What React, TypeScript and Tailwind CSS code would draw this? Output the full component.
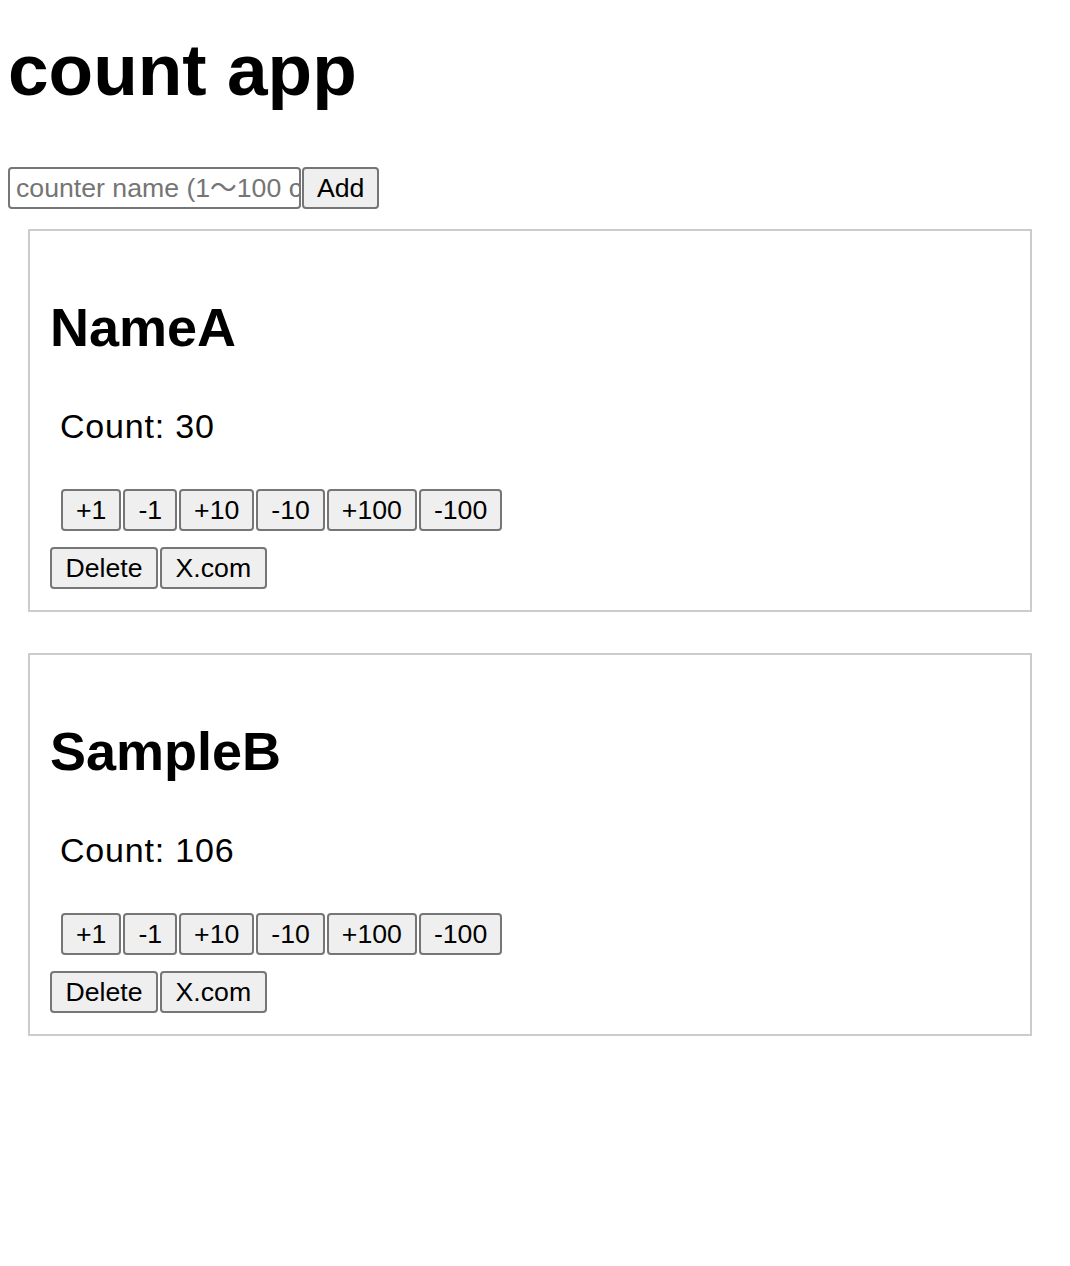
const font = { fontFamily: '"Liberation Sans", "Noto Sans CJK JP", Arial, sans-serif' }

interface Counter {
  name: string
  count: number
}

const counters: Counter[] = [
  { name: 'NameA', count: 30 },
  { name: 'SampleB', count: 106 },
]

const steps = ['+1', '-1', '+10', '-10', '+100', '-100']

function Btn({ label, wide }: { label: string; wide?: boolean }) {
  return (
    <button
      className={
        wide
          ? 'h-[42px] px-[13.5px] flex items-center justify-center bg-[#efefef] border-2 border-[#767676] rounded-[4px] text-[26.67px] leading-none text-black'
          : 'h-[42px] px-[13px] flex items-center justify-center bg-[#efefef] border-2 border-[#767676] rounded-[4px] text-[26.67px] leading-none text-black'
      }
    >
      {label}
    </button>
  )
}

function CounterCard({ counter }: { counter: Counter }) {
  return (
    <div className="border-2 border-[#cccccc] px-[20px] pt-[20px] pb-[21px]">
      <h2 className="mt-[49px] text-[54px] leading-none font-bold text-black">{counter.name}</h2>
      <p className="mt-[55px] ml-[10px] text-[34px] leading-none tracking-[0.8px] text-black">
        Count: {counter.count}
      </p>
      <div className="mt-[46px] ml-[11px] flex gap-[2px]">
        {steps.map((s) => (
          <Btn key={s} label={s} />
        ))}
      </div>
      <div className="mt-[16px] flex gap-[2px]">
        <Btn label="Delete" wide />
        <Btn label="X.com" wide />
      </div>
    </div>
  )
}

export default function App() {
  return (
    <div className="min-h-[1266px] bg-white px-[8px]" style={font}>
      <h1 className="pt-[33px] text-[73px] leading-none font-bold text-black">count app</h1>
      <div className="mt-[61px] flex">
        <input
          className="w-[293px] h-[42px] border-2 border-[#767676] rounded-[4px] pl-[6px] text-[26.67px] text-black placeholder:text-[#757575] outline-none"
          placeholder="counter name (1〜100 characters)"
        />
        <div className="ml-[1px]">
          <Btn label="Add" />
        </div>
      </div>
      <div className="mt-[20px] ml-[20px] w-[1004px] flex flex-col gap-[41px]">
        {counters.map((c) => (
          <CounterCard key={c.name} counter={c} />
        ))}
      </div>
    </div>
  )
}
